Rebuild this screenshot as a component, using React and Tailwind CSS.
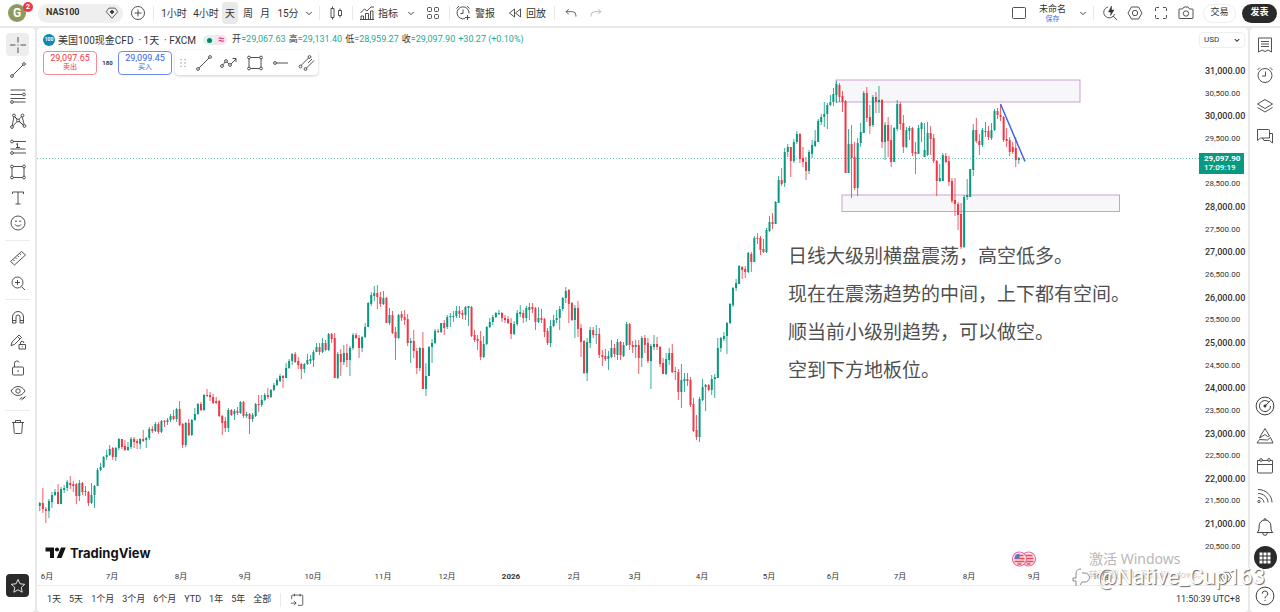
import React from "react";

const clsx = (...classes) => classes.filter(Boolean).join(" ");

// --- Chart data ---
// One candle per day: direction (u = up, d = down), then high, body top, body bottom, low on the chart canvas.
const CANDLES = `
u502,503,506,511 d488,503,509,513 d507,509,511,523 u499,501,511,518 u492,495,502,508 u489,492,495,496 d484,492,504,504 u487,489,504,504 u485,488,490,493 u480,482,488,491
d476,483,485,489 d481,484,486,492 d483,484,496,504 u480,483,496,501 d482,483,492,495 d486,491,492,496 d491,492,503,506 u483,495,503,504 u485,486,495,508 u468,470,486,486
u463,467,470,471 u456,457,467,468 u450,455,457,460 u445,449,455,456 d447,448,457,460 u447,448,457,461 u438,439,448,450 d439,439,447,449 d440,446,450,451 u442,447,450,451
u437,439,447,449 d437,439,442,448 d439,441,443,449 u438,439,444,449 d430,439,441,442 u437,438,440,448 u427,429,438,440 d426,429,431,433 u422,424,431,432 d422,424,432,434
u420,421,432,433 d420,421,422,427 u418,420,422,425 u414,416,420,422 d410,416,419,420 u408,409,419,422 d401,409,425,426 d423,424,445,448 u422,423,445,447 d419,423,435,436
u419,420,435,436 u408,414,420,421 u403,404,414,415 d402,404,410,411 u394,395,410,411 d389,395,396,397 d392,395,397,401 d394,397,403,404 d397,401,403,404 d400,401,416,417
d415,416,423,435 d417,421,428,432 u408,410,428,432 d409,410,415,416 u409,411,414,420 d407,411,413,415 u401,402,413,414 d401,402,416,418 u412,414,416,418 d413,414,419,434
u413,415,419,422 u403,404,416,417 d395,404,405,412 u395,400,405,407 u393,395,400,401 d388,395,397,399 u389,390,397,398 u383,385,390,391 u378,380,385,386 u374,376,381,382
d375,376,378,388 u363,368,378,378 u359,361,368,369 u353,354,361,365 d352,354,362,363 d357,361,365,369 d363,364,369,379 u363,364,369,373 u354,360,364,365 u355,359,361,364
u350,352,360,367 u343,347,352,352 d343,347,352,355 u338,343,352,353 d340,343,350,351 u333,334,350,351 d333,334,339,343 d333,338,378,378 u352,354,378,379 d349,354,362,376
u345,353,362,365 d344,353,360,367 u346,348,360,376 u333,335,348,350 d333,335,338,339 d335,338,348,358 u336,337,348,352 u323,327,337,338 u302,303,327,327 u292,295,304,306
u286,293,296,301 d285,293,297,309 d292,297,304,307 u291,298,304,305 d297,298,323,323 u308,315,323,325 d311,315,333,334 d327,332,338,360 u314,315,338,339 d311,314,318,321
d310,317,320,325 d314,319,343,346 u338,341,343,363 d330,341,351,358 d348,351,368,374 u347,348,368,371 d332,348,389,389 u363,376,389,396 u346,347,376,376 u339,343,347,363
u329,331,343,344 d329,331,332,333 u323,323,332,333 d320,323,328,335 u315,317,327,329 u313,316,317,327 u311,316,317,322 u306,311,316,318 d306,311,314,318 d310,313,315,319
u306,307,315,320 u306,306,308,326 d306,307,336,337 d330,335,340,342 d335,339,341,350 d331,341,357,360 u336,344,357,358 u326,327,344,345 u318,322,327,328 u315,317,322,325
u312,313,317,318 u310,313,314,315 d312,313,318,322 d315,318,320,323 d316,319,323,324 d318,323,334,339 u321,324,334,335 u310,313,324,326 u305,312,314,317 d310,313,318,323
u306,308,318,322 u303,307,310,320 d303,307,309,313 d307,308,322,330 u307,318,322,323 d309,318,320,323 d318,319,332,337 d328,331,343,345 u320,326,343,347 u315,320,326,327
u310,318,320,323 u306,309,318,330 u297,298,309,311 u287,291,298,303 d289,290,304,323 d302,303,320,321 u305,308,320,338 d301,308,329,337 d324,328,342,357 d340,341,373,374
u338,342,373,381 u327,330,343,348 d327,330,335,338 u325,334,335,344 d328,334,355,358 d350,355,357,366 d349,356,359,361 u351,356,359,370 u340,348,357,358 d344,348,354,357
u339,342,355,360 d341,342,355,360 u342,345,356,357 u322,324,345,346 d323,324,345,350 d341,345,347,353 u340,345,347,358 d340,345,358,374 u336,338,358,367 d335,338,345,353
d338,343,361,363 u344,346,361,389 u335,344,347,350 d337,344,347,350 d346,347,364,367 d358,363,374,374 u353,359,374,375 u348,353,360,365 d344,353,372,373 d367,371,372,380
d369,372,392,400 u364,380,392,408 u373,379,381,392 d373,379,381,386 d377,380,405,407 d398,404,431,432 d415,430,437,440 u397,399,437,442 u379,387,400,401 u384,385,387,411
d384,385,390,391 u375,379,390,395 u374,377,379,398 u338,348,378,378 u337,338,348,352 u332,336,339,341 u322,323,336,354 u303,304,323,324 u287,288,305,307 u279,283,288,291
u265,266,284,284 d266,267,270,279 d266,269,272,278 u252,253,272,273 d252,254,262,272 u236,238,262,262 d233,238,239,244 d236,238,250,255 d239,249,252,253 u228,230,252,253
u216,222,231,232 d213,222,224,229 u201,202,224,224 u176,180,203,203 d168,180,184,186 u148,152,183,187 u144,147,152,157 d147,147,161,177 u139,142,161,163 u131,134,142,144
d133,134,159,163 d147,158,162,167 d157,162,171,180 u150,152,171,174 u140,145,154,158 u130,141,146,147 u119,121,142,142 u114,117,122,125 u102,114,117,127 u103,105,114,129
u95,102,105,106 u88,94,102,106 u81,84,95,103 d83,85,97,102 d91,96,102,112 d100,101,173,173 u129,144,173,173 d125,144,158,198 d142,157,188,190 u138,143,188,196
u123,132,143,147 u91,93,133,133 d87,93,118,122 d105,117,126,134 u95,97,125,127 d92,97,102,113 u86,100,102,113 d99,100,142,148 u122,125,142,160 d117,125,141,157
d125,140,162,167 u127,128,162,162 u100,104,129,131 d102,104,124,130 d115,123,147,153 u127,130,147,148 u126,128,131,140 d127,128,153,156 d142,152,154,174 u125,128,154,154
u122,123,129,142 u123,150,157,157 u122,133,155,156 d126,133,139,155 d134,138,161,163 d160,161,181,196 u164,178,181,182 u153,155,181,181 d153,156,162,163 d156,161,182,186
d178,181,201,203 d178,200,204,216 d202,204,215,230 d203,214,247,249 u195,197,247,248 u179,195,197,200 u169,169,197,197 u124,130,170,176 d118,130,141,143 d134,141,145,155
u128,130,145,147 u122,131,132,137 d126,131,137,140 u123,130,138,140 u109,111,130,131 d108,111,115,119 d105,115,117,121 d116,117,140,142 d128,139,141,147 d137,140,152,156
d142,147,152,154 d137,148,160,167 u157,158,160,164`
  .trim()
  .split(/\s+/)
  .map((s) => [s[0] === "u", ...s.slice(1).split(",").map(Number)]);

const FIRST_X = 39.8;
const STEP = 3.0405;

const PRICES = Array.from({ length: 22 }, (_, i) => 31000 - i * 500);

const MONTHS = [
  ["6月", 47], ["7月", 112], ["8月", 181], ["9月", 245], ["10月", 313], ["11月", 383],
  ["12月", 447], ["2026", 511], ["2月", 574], ["3月", 635], ["4月", 702], ["5月", 769],
  ["6月", 833], ["7月", 900], ["8月", 969], ["9月", 1034], ["10月", 1101],
];

const NOTES = [
  "日线大级别横盘震荡，高空低多。",
  "现在在震荡趋势的中间，上下都有空间。",
  "顺当前小级别趋势，可以做空。",
  "空到下方地板位。",
];

const RANGES = ["1天", "5天", "1个月", "3个月", "6个月", "YTD", "1年", "5年", "全部"];

// --- Icons ---
function Icon({ children, size = 18, className }) {
  return (
    <svg
      width={size}
      height={size}
      viewBox="0 0 18 18"
      fill="none"
      stroke="currentColor"
      strokeWidth="0.85"
      className={clsx("shrink-0", className)}
      aria-hidden="true"
    >
      {children}
    </svg>
  );
}

const Dot = ({ x, y, r = 1.4 }) => <circle cx={x} cy={y} r={r} fill="white" />;

const TrendIcon = () => (
  <Icon>
    <path d="M3.5 14.5l11-11" />
    <Dot x={3} y={15} />
    <Dot x={15} y={3} />
  </Icon>
);
const RectIcon = () => (
  <Icon>
    <path d="M3 3.5h12v11H3z" />
    <Dot x={3} y={3.5} />
    <Dot x={15} y={3.5} />
    <Dot x={3} y={14.5} />
    <Dot x={15} y={14.5} />
  </Icon>
);
const ChevronIcon = () => (
  <Icon size={10}>
    <path d="M4 7l5 5 5-5" strokeWidth="1.7" />
  </Icon>
);

const DRAW_TOOLS = [
  ["十字线", <Icon><path d="M9 1v5.5M9 11.5V17M1 9h5.5M11.5 9H17M8.5 9h1" /></Icon>],
  ["趋势线", <TrendIcon />],
  ["斐波那契", (
    <Icon>
      <path d="M1.5 3h15M1.5 7.5h12M4.500 15h12M1.5 11.500h15" />
      <Dot x={15} y={7.5} />
      <Dot x={3} y={15} />
    </Icon>
  )],
  ["形态", (
    <Icon>
      <path d="M3 15L5 4l4 4.5L13 4l2.5 10L9 8.5 3 15M5 4l10 10" />
      <Dot x={3} y={15} />
      <Dot x={5} y={3.5} />
      <Dot x={9} y={8.5} />
      <Dot x={13.5} y={3.5} />
      <Dot x={15.5} y={14} />
    </Icon>
  )],
  ["预测", (
    <Icon>
      <path d="M4 3.5h13M1.5 11h15M4 15h13M8.5 5.5v4M7 6.500l1.500-1 M7 9.500h4" />
      <Dot x={3} y={3.5} />
      <Dot x={3} y={15} />
    </Icon>
  )],
  ["矩形", <RectIcon />],
  ["文本", <Icon><path d="M3.5 5V3h11v2M9 3v12M6.5 15h5" /></Icon>],
  ["表情", (
    <Icon>
      <circle cx="9" cy="9" r="7" />
      <path d="M6 10.5c1 2 5 2 6 0" />
      <path d="M7 6.5v1.5M11 6.5v1.5" strokeWidth="1.2" />
    </Icon>
  )],
];

const EDIT_TOOLS = [
  ["测量", (
    <Icon>
      <path d="M1.5 12.5l11-10 4 3.5-11 10zM4 10.5l1.5 1.5M6.2 8.5l1.5 1.5M8.4 6.5l1.5 1.5M10.6 4.5l1.5 1.5" />
    </Icon>
  )],
  ["放大", (
    <Icon>
      <circle cx="8.5" cy="8.5" r="5.5" />
      <path d="M12.5 12.5l3.5 3.5M8.5 6v5M6 8.5h5" />
    </Icon>
  )],
];

const LOCK_TOOLS = [
  ["磁铁", (
    <Icon>
      <path d="M3.5 15V9a5.5 5.5 0 0 1 11 0v6h-3.5V9a2 2 0 0 0-4 0v6zM3.5 12.5H7M11 12.5h3.5" />
    </Icon>
  )],
  ["保持绘图", (
    <Icon>
      <path d="M2 12.5l1-3.5 7-7 2.5 2.5-7 7zM8.5 3.5L11 6M10 11.5h6.5V16H10zM11.5 11.5V10a1.7 1.7 0 0 1 3.4 0M13.2 13.2v1" />
    </Icon>
  )],
  ["锁定", (
    <Icon>
      <path d="M4.5 8h9a1 1 0 0 1 1 1v6a1 1 0 0 1-1 1h-9a1 1 0 0 1-1-1V9a1 1 0 0 1 1-1zM5.500 8V4.500a2.500 2.500 0 0 1 4.800-1M9 11v2" />
    </Icon>
  )],
  ["隐藏", (
    <Icon>
      <path d="M2 7c3.5-6 10.500-6 14 0-3.500 6-10.500 6-14 0z" />
      <circle cx="9" cy="7" r="2.200" />
      <path d="M10.500 15.500l2.500-2 1 1 2.500-2M12.500 16l3.500-3" />
    </Icon>
  )],
];

const RIGHT_TOP = [
  ["自选表", <Icon><path d="M2.500 2h13v14l-3.500-2-3 1.500L6 14l-3.500 2zM5 5.500h8M5 8h8M5 10.500h8" /></Icon>],
  ["警报", (
    <Icon>
      <circle cx="9" cy="9.500" r="7" />
      <path d="M9.500 5.500v4.500H6M1.500 4L4 1.500M16.500 4L14 1.500" />
    </Icon>
  )],
  ["图层", <Icon><path d="M9 2.500L16.500 7 9 11.500 1.500 7zM1.500 10.500L9 15l7.500-4.500" /></Icon>],
  ["聊天", <Icon><path d="M1.500 2.500h11a1 1 0 0 1 1 1V11H4.500l-3 2.500zM13.500 6.500h3V16l-3-2.500H8L6.500 11" /></Icon>],
];

const RIGHT_BOTTOM = [
  ["筛选器", (
    <Icon size={20}>
      <circle cx="9" cy="9" r="8" />
      <path d="M12.500 5.500A5 5 0 1 0 14 9M9 9l5-5" />
      <circle cx="9" cy="9" r="1" fill="currentColor" />
    </Icon>
  )],
  ["编辑器", <Icon><path d="M5 8L9 1.500l4.500 7.500-2 .5L9 7.500 3.500 11zM3.500 12.500l8 .5 3-2.500L17 16H1z" /></Icon>],
  ["日历", (
    <Icon>
      <path d="M1.500 3.500h15V15a1 1 0 0 1-1 1h-13a1 1 0 0 1-1-1zM1.500 7.500h15" />
      <Dot x={5} y={3} />
      <Dot x={13} y={3} />
    </Icon>
  )],
  ["动态", (
    <Icon>
      <path d="M2 2.500c8 0 14 6 14 13M2 6.500c5.500 0 10 4 10 9M2 10.500c3 0 6 2 6 5" />
      <circle cx="3" cy="14.500" r="1.200" />
    </Icon>
  )],
  ["通知", <Icon size={20}><path d="M2 14c1.500-1.500 1.700-3 1.700-6a5.300 5.300 0 0 1 10.600 0c0 3 .2 4.500 1.700 6zM7 14.500a2 2 0 0 0 4 0M8 2.500a1 1 0 0 1 2 0" /></Icon>],
];

function ToolGroup({ items, className }) {
  return (
    <div className={clsx("flex flex-col items-center justify-between", className)}>
      {items.map(([name, icon]) => (
        <button
          key={name}
          aria-label={name}
          className={clsx("flex h-[23px] w-[23px] items-center justify-center rounded-sm", name === "十字线" && "bg-[#ededed]")}
        >
          {icon}
        </button>
      ))}
    </div>
  );
}

const Divider = ({ className }) => <span className={clsx("h-[14px] w-px shrink-0 bg-[#e9e9e9]", className)} />;

function IconButton({ label, className, children }) {
  return (
    <button aria-label={label} className={clsx("flex h-[22px] shrink-0 items-center justify-center", className)}>
      {children}
    </button>
  );
}

function Header() {
  const intervals = [
    ["1小时", "w-[32px]"],
    ["4小时", "w-[32px]"],
    ["天", "w-[16px] bg-[#e9e9e9]"],
    ["周", "w-[20px]"],
    ["月", "w-[14px]"],
    ["15分", "w-[32px]"],
  ];

  return (
    <header className="flex h-[26px] items-center bg-white pr-[3px] text-[10px]">
      <div className="relative flex w-[38px] shrink-0 items-center pl-[8px]">
        <span className="flex h-[18px] w-[18px] items-center justify-center rounded-full bg-[#8d9a5b] text-[12px] font-bold text-white">G</span>
        <span className="absolute -top-[2px] left-[23px] flex h-[10px] w-[10px] items-center justify-center rounded-full bg-[#f23645] text-[7px] font-bold text-white">2</span>
      </div>
      <button className="flex h-[19px] w-[85px] shrink-0 items-center justify-between rounded-full bg-[#efefef] pr-[3px] pl-[8px] text-[9px] font-bold">
        NAS100
        <Icon size={16}>
          <path d="M5.500 3.500h7l3 4-6.500 7.500-6.500-7.500z" />
          <path d="M9 5.500v4.500M6.800 7.700h4.400" strokeWidth="1.800" />
        </Icon>
      </button>
      <IconButton label="添加商品" className="w-[30px]">
        <Icon>
          <circle cx="9" cy="9" r="6.500" />
          <path d="M9 5.500v7M5.500 9h7" />
        </Icon>
      </IconButton>
      <Divider className="mr-[4px]" />
      {intervals.map(([label, cls]) => (
        <button key={label} className={clsx("flex h-[22px] shrink-0 items-center justify-center rounded-sm whitespace-nowrap", cls)}>
          {label}
        </button>
      ))}
      <IconButton label="更多周期" className="w-[10px]"><ChevronIcon /></IconButton>
      <Divider className="mx-[5px]" />
      <IconButton label="图表类型" className="w-[22px]">
        <Icon>
          <path d="M4 4.500h3v9H4zM5.500 2.500v2M5.500 13.500v2M11.500 6.500h3v5h-3zM13 4.500v2M13 11.500v2" />
        </Icon>
      </IconButton>
      <Divider className="mx-[5px]" />
      <button className="flex shrink-0 items-center gap-[2px]">
        <Icon>
          <path d="M3 15.500V12h2.500v3.500M7.500 15.500V9.500h3v6M12.500 15.500V7H15v8.500M2 15.500h14M2.500 9l4-4 2.500 2 4-4h3" />
        </Icon>
        指标
      </button>
      <IconButton label="指标模板" className="ml-[3px] w-[20px]"><ChevronIcon /></IconButton>
      <IconButton label="布局" className="w-[24px]">
        <Icon>
          <rect x="3.500" y="3.500" width="4" height="4" rx="1" />
          <rect x="10.500" y="3.500" width="4" height="4" rx="1" />
          <rect x="3.500" y="10.500" width="4" height="4" rx="1" />
          <rect x="10.500" y="10.500" width="4" height="4" rx="1" />
        </Icon>
      </IconButton>
      <Divider className="mx-[4px]" />
      <button className="flex shrink-0 items-center gap-[3px]">
        <Icon>
          <path d="M11 14.500a6 6 0 1 1 4-5M9 5.500V9.500H6.500M2.500 4.500L5 2M15.500 4.500L13 2M13.500 11v5M11 13.500h5" />
        </Icon>
        警报
      </button>
      <button className="ml-[11px] flex shrink-0 items-center gap-[2px]">
        <Icon>
          <path d="M8.500 5v8l-5-4zM14.500 5v8l-5-4z" />
        </Icon>
        回放
      </button>
      <Divider className="mx-[8px]" />
      <IconButton label="撤销" className="w-[15px]">
        <Icon size={16}><path d="M6.500 4.500l-3 3 3 3M3.500 7.500h7a4 4 0 0 1 4 4v1.500" /></Icon>
      </IconButton>
      <IconButton label="重做" className="ml-[10px] w-[16px] text-[#a5a5a5]">
        <Icon size={16}><path d="M11.500 4.500l3 3-3 3M14.500 7.500h-7a4 4 0 0 0-4 4v1.500" /></Icon>
      </IconButton>

      <IconButton label="布局设置" className="ml-auto w-[26px]">
        <Icon><rect x="2.500" y="3.500" width="13" height="11" rx="1" /></Icon>
      </IconButton>
      <button className="flex w-[41px] shrink-0 flex-col items-center text-[9px] leading-[11px]">
        未命名
        <span className="text-[7px] leading-[8px] text-[#3d6bff]">保存</span>
      </button>
      <IconButton label="打开布局" className="w-[20px]"><ChevronIcon /></IconButton>
      <Divider className="mr-[3px]" />
      <IconButton label="快速搜索" className="w-[25px]">
        <Icon>
          <path d="M7 3a5.500 5.500 0 1 0 6.500 7M12 12l4 4" />
          <path d="M10.500 2L7.500 8h2.500l-.5 3.500L13 6h-2.500z" fill="currentColor" strokeWidth="0.5" />
        </Icon>
      </IconButton>
      <IconButton label="设置" className="w-[26px]">
        <Icon>
          <path d="M5.500 3h7L16 9l-3.500 6h-7L2 9z" />
          <circle cx="9" cy="9" r="2.700" />
        </Icon>
      </IconButton>
      <IconButton label="全屏" className="w-[25px]">
        <Icon><path d="M3.500 7V4.500a1 1 0 0 1 1-1H7M11 3.500h2.500a1 1 0 0 1 1 1V7M14.500 11v2.500a1 1 0 0 1-1 1H11M7 14.500H4.500a1 1 0 0 1-1-1V11" /></Icon>
      </IconButton>
      <IconButton label="快照" className="mr-[4px] w-[26px]">
        <Icon>
          <path d="M2.500 5h3l1.500-2h4l1.500 2h3a.5.5 0 0 1 .5.5V14a.5.5 0 0 1-.5.5h-13A.5.5 0 0 1 2 14V5.500a.5.5 0 0 1 .5-.5z" />
          <circle cx="9" cy="9.500" r="2.700" />
        </Icon>
      </IconButton>
      <button className="flex h-[19px] w-[33px] shrink-0 items-center justify-center rounded-full border border-[#ededed] text-[9px]">交易</button>
      <button className="ml-[6px] flex h-[19px] w-[35px] shrink-0 items-center justify-center rounded-full bg-[#2a2a2a] text-[9px] font-bold text-white">发表</button>
    </header>
  );
}

function Quote({ label, value }) {
  return (
    <span>
      {label}=<span className="text-[#22ab94]">{value}</span>
    </span>
  );
}

function Legend() {
  return (
    <div className="absolute top-[5px] left-[6px]">
      <div className="flex h-[14px] items-center whitespace-nowrap">
        <span className="flex h-[12px] w-[12px] items-center justify-center rounded-full bg-[#1487ad] text-[5px] font-bold text-white">100</span>
        <h1 className="ml-[3px] text-[10px]">美国100现金CFD&nbsp; · 1天&nbsp; · FXCM</h1>
        <span className="ml-[7px] flex h-[10px] w-[12px] items-center justify-center rounded-l-full bg-[#dff3ed]">
          <span className="h-[5px] w-[5px] rounded-full bg-[#0b8264]" />
        </span>
        <span className="flex h-[10px] w-[12px] items-center justify-center rounded-r-full bg-[#fbe0ee] text-[11px] font-bold text-[#d0408a]">≈</span>
        <div className="ml-[5px] flex gap-[3px] text-[9px]">
          <Quote label="开" value="29,067.63" />
          <Quote label="高" value="29,131.40" />
          <Quote label="低" value="28,959.27" />
          <Quote label="收" value="29,097.90" />
          <span className="text-[#22ab94]">+30.27 (+0.10%)</span>
        </div>
      </div>
      <div className="mt-[3px] flex items-center">
        <button className="flex h-[24px] w-[54px] flex-col items-center justify-center rounded border border-[#f28b93] text-[9px] leading-[10px] text-[#f23645]">
          29,097.65
          <span className="text-[7px] leading-[9px]">卖出</span>
        </button>
        <span className="w-[21px] text-center text-[6px] font-bold">180</span>
        <button className="flex h-[24px] w-[54px] flex-col items-center justify-center rounded border border-[#6d8bf5] text-[9px] leading-[10px] text-[#3761f0]">
          29,099.45
          <span className="text-[7px] leading-[9px]">买入</span>
        </button>
        <div className="ml-[3px] flex h-[25px] w-[143px] items-center rounded bg-white pl-[2px] shadow-[0_1px_3px_rgba(0,0,0,0.2)]">
          <Icon size={12} className="mr-[3px] text-[#aaaaaa]">
            <path d="M6 3v2M6 8v2M6 13v2M12 3v2M12 8v2M12 13v2" strokeWidth="2" />
          </Icon>
          <div className="flex gap-[2px]">
            <IconButton label="线条" className="w-[23px]"><TrendIcon /></IconButton>
            <IconButton label="路径" className="w-[24px]">
              <Icon>
                <path d="M2 12l4-5 4 4 6-6M12.500 4.500H16V8" />
                <Dot x={2} y={12} />
                <Dot x={6} y={7} />
                <Dot x={10} y={11} />
              </Icon>
            </IconButton>
            <IconButton label="方框" className="w-[24px]"><RectIcon /></IconButton>
            <IconButton label="水平射线" className="w-[24px]">
              <Icon>
                <path d="M3 9h13" />
                <Dot x={3} y={9} />
              </Icon>
            </IconButton>
            <IconButton label="平行通道" className="w-[23px]">
              <Icon>
                <path d="M2.500 12l9-9M7 15.500l9-9M10 9l4-4" />
                <Dot x={2.500} y={12.500} />
                <Dot x={11.500} y={3} />
                <Dot x={7.500} y={15} />
              </Icon>
            </IconButton>
          </div>
        </div>
      </div>
    </div>
  );
}

function Flag({ x }) {
  return (
    <g>
      <circle cx={x} cy="559" r="7" fill="white" stroke="#e86aa6" strokeWidth="1.200" />
      <circle cx={x} cy="559" r="5.500" fill="#fbdada" />
      <path d={`M${x - 4} 555.500h8M${x - 5} 558.500h10M${x - 5} 561.500h10M${x - 2} 564h4`} stroke="#ee4a55" strokeWidth="1.300" />
    </g>
  );
}

function Chart() {
  return (
    <svg viewBox="37 28 1162 540" className="block w-full" role="img" aria-label="NAS100 日线图">
      <rect x="836" y="80" width="244" height="22" fill="#f7f6f8" stroke="#cd9fd6" />
      <rect x="842" y="195" width="277.500" height="16.500" fill="#f7f6f8" stroke="#cd9fd6" />
      <path d="M37 158.500H1199" stroke="#6fc4b4" strokeDasharray="1 2" />
      {CANDLES.map(([up, high, top, bottom, low], i) => {
        const x = FIRST_X + i * STEP;
        const color = up ? "#089981" : "#f23645";
        return (
          <g key={i} fill={color}>
            <rect x={x - 0.4} y={high} width="0.8" height={low - high} />
            <rect x={x - 1} y={top} width="2" height={Math.max(bottom - top, 1)} />
          </g>
        );
      })}
      <path d="M1000.500 104L1025 161.500" stroke="#3f63ea" strokeWidth="1.500" />
      <g fill="#131313">
        <path d="M45.500 547.500h8.500v10.500h-4v-6.500h-4.500z" />
        <circle cx="57" cy="549.500" r="2.100" />
        <path d="M61 547.500h4.800l-4.300 10.500h-4.700z" />
      </g>
      <Flag x={1028.500} />
      <Flag x={1019.500} />
      <path d="M1014.500 558.500a5.500 5.500 0 0 1 5-5v5z" fill="#3f7fd6" />
    </svg>
  );
}

function PriceAxis() {
  return (
    <div className="relative w-[49px] shrink-0">
      <label className="flex pt-[4px] pr-[3px]">
        <span className="sr-only">货币</span>
        <span className="relative flex w-full items-center rounded border border-[#efefef]">
          <select className="h-[14px] w-full appearance-none pl-[4px] text-[8px] leading-[14px]">
            <option>USD</option>
          </select>
          <span className="pointer-events-none absolute right-[3px]">
            <Icon size={8}><path d="M4 7l5 5 5-5" strokeWidth="2.500" /></Icon>
          </span>
        </span>
      </label>
      <div className="mt-[17px] flex h-[488px] flex-col justify-between pl-[6px]">
        {PRICES.map((price) => (
          <div key={price} className={clsx("relative h-[12px] leading-[12px]", price % 1000 === 0 ? "text-[9px] font-medium" : "text-[8px]")}>
            {price === 29000 ? (
              <div className="absolute -top-[3px] -left-[6px] flex h-[21px] w-[45px] flex-col justify-center bg-[#089981] pl-[5px] text-[8px] leading-[9px] text-white">
                <span className="font-bold">29,097.90</span>
                <span>17:09:19</span>
              </div>
            ) : (
              `${price.toLocaleString("en-US")}.00`
            )}
          </div>
        ))}
      </div>
    </div>
  );
}

export default function App() {
  return (
    <div className="relative flex min-h-screen flex-col gap-[2px] overflow-hidden bg-[#e9e9e9] font-['Roboto','Noto_Sans_CJK_SC',sans-serif] text-[#333333]">
      <Header />
      <div className="flex flex-1 gap-[2px]">
        <aside className="flex w-[35px] shrink-0 flex-col items-center rounded-r bg-white pt-[5px] pb-[15px]">
          <ToolGroup items={DRAW_TOOLS} className="h-[202px]" />
          <span className="my-[5px] h-px w-[25px] bg-[#ececec]" />
          <ToolGroup items={EDIT_TOOLS} className="h-[48px]" />
          <span className="my-[5px] h-px w-[25px] bg-[#ececec]" />
          <ToolGroup items={LOCK_TOOLS} className="h-[100px]" />
          <span className="my-[5px] h-px w-[25px] bg-[#ececec]" />
          <IconButton label="删除" className="w-[23px]">
            <Icon><path d="M3 4.500h12M6.500 4.500v-2h5v2M4.500 4.500l.7 10a1 1 0 0 0 1 1h5.600a1 1 0 0 0 1-1l.7-10" /></Icon>
          </IconButton>
          <button aria-label="收藏" className="mt-auto flex h-[23px] w-[23px] items-center justify-center rounded bg-[#2a2a2a] text-white">
            <Icon><path d="M9 2.500l2 4.300 4.700.5-3.500 3.200 1 4.700L9 12.800l-4.200 2.400 1-4.700L2.300 7.300 7 6.800z" /></Icon>
          </button>
        </aside>

        <main className="relative flex min-w-0 flex-1 flex-col rounded bg-white">
          <div className="flex">
            <div className="relative min-w-0 flex-1">
              <Chart />
              <Legend />
              <div className="absolute top-[210px] left-[751px] text-[19px] leading-[38px] whitespace-nowrap text-[#505050]">
                {NOTES.map((note) => (
                  <p key={note}>{note}</p>
                ))}
              </div>
              <div className="absolute bottom-[4px] left-[33px] font-['Inter'] text-[13px] leading-[22px] font-bold text-[#131313]">TradingView</div>
            </div>
            <PriceAxis />
          </div>
          <div className="relative flex h-[18px] items-center justify-end border-b border-[#ececec] pr-[15px] text-[8px] leading-[17px]">
            {MONTHS.map(([label, x]) => (
              <span
                key={x}
                className={clsx("absolute top-0 -translate-x-1/2", label === "2026" && "font-bold")}
                style={{ left: `${((x - 37) / 1211) * 100}%` }}
              >
                {label}
              </span>
            ))}
            <button aria-label="坐标设置">
              <Icon size={14}>
                <path d="M5.500 3h7L16 9l-3.500 6h-7L2 9z" />
                <circle cx="9" cy="9" r="2.700" />
              </Icon>
            </button>
          </div>
          <footer className="flex flex-1 items-center pt-[2px] pr-[8px] pl-[10px] text-[9px]">
            <div className="flex gap-[8px]">
              {RANGES.map((range) => (
                <button key={range}>{range}</button>
              ))}
            </div>
            <Divider className="mr-[6px] ml-[9px]" />
            <IconButton label="前往日期" className="w-[20px]">
              <Icon size={16}>
                <path d="M3 8V4.500a1 1 0 0 1 1-1h10.500a1 1 0 0 1 1 1V14a1 1 0 0 1-1 1H10M6 2v3M12.500 2v3M2 12.500h6M5.500 10L8 12.500 5.500 15" />
              </Icon>
            </IconButton>
            <span className="ml-auto">11:50:39 UTC+8</span>
          </footer>
        </main>

        <aside className="flex w-[30px] shrink-0 flex-col items-center rounded-l bg-white pt-[5px] pb-[5px]">
          <ToolGroup items={RIGHT_TOP} className="h-[115px]" />
          <ToolGroup items={RIGHT_BOTTOM} className="mt-auto h-[144px]" />
          <button aria-label="应用" className="mt-[8px] flex h-[23px] w-[23px] items-center justify-center rounded-full bg-[#2a2a2a] text-white">
            <Icon>
              <path d="M3.500 3.500h3v3h-3zM7.500 3.500h3v3h-3zM11.500 3.500h3v3h-3zM3.500 7.500h3v3h-3zM7.500 7.500h3v3h-3zM11.500 7.500h3v3h-3zM3.500 11.500h3v3h-3zM7.500 11.500h3v3h-3zM11.500 11.500h3v3h-3z" fill="currentColor" stroke="none" />
            </Icon>
          </button>
          <button aria-label="帮助" className="mt-[16px] flex h-[22px] w-[22px] items-center justify-center">
            <Icon size={20}>
              <circle cx="9" cy="9" r="8" />
              <path d="M6.500 7a2.500 2.500 0 1 1 3.500 2.300c-.7.3-1 .8-1 1.700M9 12.500v1" />
            </Icon>
          </button>
        </aside>
      </div>

      <div className="pointer-events-none absolute right-[50px] bottom-[30px] w-[141px] whitespace-nowrap text-[#b8b8b8]">
        <p className="font-['Noto_Sans','Noto_Sans_CJK_SC',sans-serif] text-[14px] leading-[18px]">激活 Windows</p>
        <p className="text-[9px] leading-[14px] text-[#cfcfcf]">转到“设置”以激活 Windows。</p>
      </div>
      <div className="pointer-events-none absolute right-[15px] bottom-[20px] flex items-center gap-[7px] text-[22px] leading-[30px] text-white [text-shadow:1px_1px_1px_#666666]">
        <svg width="18" height="22" viewBox="0 0 18 22" fill="none" stroke="#888888" strokeWidth="1" aria-hidden="true">
          <path d="M9 3c-4 0-5 2-5 6v3H1v3h3v5M10 7h3a4 4 0 0 1 0 9h-3l-2 3" />
        </svg>
        @Native_Cup163
      </div>
    </div>
  );
}
